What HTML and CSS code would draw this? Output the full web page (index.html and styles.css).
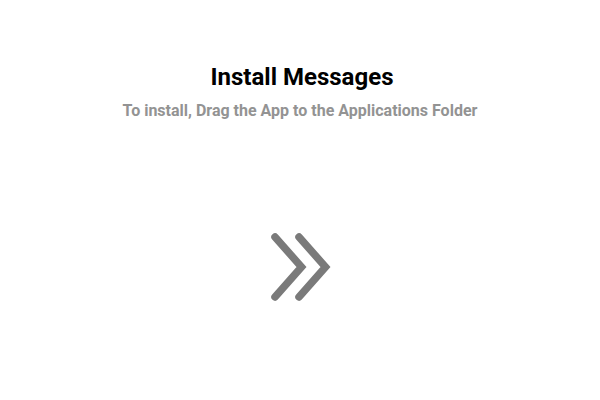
FILE: index.html
```html
<!DOCTYPE html>
<html>
<head>
<meta charset="utf-8">
<link rel="stylesheet" href="styles.css">
</head>
<body>
<main class="installer">
  <header class="intro">
    <h1 class="title">Install Messages</h1>
    <p class="subtitle">To install, Drag the App to the Applications Folder</p>
  </header>
  <div class="arrow-area">
    <svg class="arrows" width="64" height="72" viewBox="0 0 64 72" aria-hidden="true">
      <path d="M6 6 L32.5 36 L6 66 M30 6 L56.5 36 L30 66" fill="none" stroke="#7a7a7a" stroke-width="7.5" stroke-linecap="round" stroke-linejoin="miter"/>
    </svg>
  </div>
</main>
</body>
</html>
```
FILE: styles.css
```css
html, body {
  margin: 0;
  padding: 0;
  background: #ffffff;
}
body {
  font-family: Roboto, "Liberation Sans", sans-serif;
  width: 600px;
  height: 400px;
}
.installer {
  display: flex;
  flex-direction: column;
  align-items: center;
  padding-top: 63px;
}
.intro {
  display: flex;
  flex-direction: column;
  align-items: center;
  gap: 10px;
}
.title {
  margin: 0 0 0 4px;
  font-size: 24px;
  font-weight: 700;
  color: #000;
  line-height: 28px;
}
.subtitle {
  margin: 0;
  font-size: 16px;
  font-weight: 700;
  color: #939393;
  line-height: 20px;
}
.arrow-area {
  margin-top: 110px;
  display: flex;
  justify-content: center;
}
.arrows {
  display: block;
  margin-left: 2px;
}
```
